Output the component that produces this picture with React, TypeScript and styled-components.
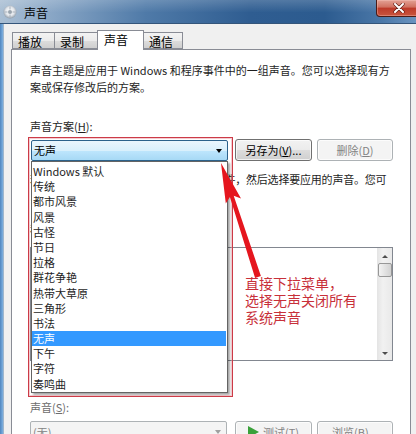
import styled, { createGlobalStyle } from 'styled-components';

const GlobalStyle = createGlobalStyle`
  html, body {
    margin: 0;
    padding: 0;
    background: #ffffff;
  }
`;

const Window = styled.div`
  position: relative;
  width: 416px;
  height: 434px;
  overflow: hidden;
  background: #f0f0f0;
  font-family: 'Noto Sans CJK SC', 'Noto Sans', sans-serif;
  font-size: 11px;
  color: #1e1e1e;
`;

const TitleBar = styled.div`
  height: 23px;
  display: flex;
  align-items: flex-start;
  border-bottom: 1px solid #34557a;
  background:
    linear-gradient(180deg, rgba(255, 255, 255, 0.18), rgba(255, 255, 255, 0) 55%),
    linear-gradient(90deg, #a9bed3 0%, #8aa7c6 12%, #4f7aa8 35%, #2f5d91 60%, #2c5b8f 78%, #4b78a8 92%, #6a94c0 100%);
`;

const IconSlot = styled.div`
  margin: 5px 0 0 3px;
  width: 14px;
  height: 14px;
`;

const Caption = styled.div`
  margin: 5px 0 0 7px;
  font-size: 12px;
  line-height: 16px;
  color: #000;
`;

const CloseButton = styled.div`
  width: 43px;
  height: 16px;
  margin-left: auto;
  margin-right: -5px;
  display: flex;
  align-items: center;
  justify-content: center;
  border: 1px solid #4a1b17;
  border-top: none;
  border-radius: 0 0 4px 4px;
  background: linear-gradient(180deg, #e3a295 0%, #d0705f 45%, #bd3a29 50%, #c9553f 100%);
  box-shadow: inset 0 0 0 1px rgba(255, 210, 200, 0.35);
`;

const Frame = styled.div`
  display: flex;
  height: 410px;
`;

const LeftEdge = styled.div`
  width: 4px;
  background: linear-gradient(90deg, #4f86c0, #7fb1e0);
  border-right: 1px solid #9fb6cc;
  box-sizing: border-box;
`;

const Body = styled.div`
  flex: 1;
  display: flex;
  flex-direction: column;
  padding: 6px 5px 0 7px;
`;

const Tabs = styled.div`
  position: relative;
  z-index: 1;
  display: flex;
  align-items: flex-end;
  height: 19px;
  padding-left: 1px;
`;

const Tab = styled.div<{ $active?: boolean; $w: number; $first?: boolean }>`
  box-sizing: border-box;
  width: ${({ $w }) => $w}px;
  height: ${({ $active }) => ($active ? 20 : 17)}px;
  margin-left: ${({ $first }) => ($first ? 0 : -1)}px;
  margin-bottom: ${({ $active }) => ($active ? -1 : 0)}px;
  padding: ${({ $active }) => ($active ? '1px 0 0 6px' : '1px 0 0 5px')};
  border: 1px solid #898c95;
  border-bottom: ${({ $active }) => ($active ? 'none' : '1px solid #898c95')};
  background: ${({ $active }) =>
    $active ? '#ffffff' : 'linear-gradient(180deg, #f3f3f3 0%, #ebebeb 50%, #dddddd 51%, #cfcfcf 100%)'};
  position: relative;
  z-index: ${({ $active }) => ($active ? 2 : 1)};
  font-size: 12px;
  line-height: 15px;
  color: #000;
`;

const Panel = styled.div`
  position: relative;
  flex: 1;
  background: #ffffff;
  border: 1px solid #898c95;
  padding: 12px 17px 0 18px;
`;

const Para = styled.p<{ $top?: number; $tight?: boolean }>`
  margin: ${({ $top }) => $top ?? 0}px 0 0;
  line-height: 17px;
  white-space: nowrap;
  letter-spacing: ${({ $tight }) => ($tight ? '-0.2px' : 'normal')};
`;

const Label = styled.div<{ $top: number; $disabled?: boolean }>`
  margin-top: ${({ $top }) => $top}px;
  line-height: 17px;
  color: ${({ $disabled }) => ($disabled ? '#6d6d6d' : '#1e1e1e')};
`;

const Row = styled.div<{ $top: number }>`
  display: flex;
  align-items: flex-start;
  margin-top: ${({ $top }) => $top}px;
  height: 22px;
`;

const Combo = styled.div<{ $open?: boolean; $disabled?: boolean }>`
  box-sizing: border-box;
  width: 197px;
  height: ${({ $open }) => ($open ? 21 : 22)}px;
  margin: ${({ $open }) => ($open ? '1px 7px 0 1px' : '0 8px 0 0')};
  display: flex;
  align-items: center;
  justify-content: space-between;
  padding: 0 5px 0 2px;
  border: 1px solid ${({ $open, $disabled }) => ($open ? '#2c628b' : $disabled ? '#adb2b5' : '#707070')};
  border-radius: 2px;
  background: ${({ $open, $disabled }) =>
    $open
      ? 'linear-gradient(180deg, #eaf6fd 0%, #d9f0fc 50%, #bee6fd 51%, #a7d9f5 100%)'
      : $disabled
      ? '#f4f4f4'
      : 'linear-gradient(180deg, #f2f2f2, #dddddd)'};
  color: ${({ $disabled }) => ($disabled ? '#838383' : '#000')};
  line-height: 17px;
`;

const Caret = styled.span<{ $disabled?: boolean }>`
  width: 0;
  height: 0;
  border-left: 3.5px solid transparent;
  border-right: 3.5px solid transparent;
  border-top: 4px solid ${({ $disabled }) => ($disabled ? '#a0a0a0' : '#000')};
`;

const Button = styled.div<{ $w: number; $disabled?: boolean; $gap?: number }>`
  box-sizing: border-box;
  width: ${({ $w }) => $w}px;
  height: 22px;
  margin-left: ${({ $gap }) => $gap ?? 0}px;
  display: flex;
  align-items: center;
  justify-content: center;
  gap: 4px;
  border: 1px solid ${({ $disabled }) => ($disabled ? '#adb2b5' : '#707070')};
  border-radius: 3px;
  background: ${({ $disabled }) =>
    $disabled ? '#f4f4f4' : 'linear-gradient(180deg, #f2f2f2 0%, #ebebeb 50%, #dddddd 51%, #cfcfcf 100%)'};
  box-shadow: inset 0 0 0 1px rgba(255, 255, 255, 0.7);
  color: ${({ $disabled }) => ($disabled ? '#838383' : '#000')};
  line-height: 17px;
`;

const PlayMark = styled.span`
  width: 0;
  height: 0;
  border-top: 6px solid transparent;
  border-bottom: 6px solid transparent;
  border-left: 11px solid #3aa13a;
`;

const EventsBox = styled.div`
  box-sizing: border-box;
  margin-top: 9px;
  height: 114px;
  border: 1px solid #828790;
  display: flex;
  justify-content: flex-end;
`;

const ScrollBar = styled.div`
  width: 15px;
  display: flex;
  flex-direction: column;
  align-items: center;
  background: linear-gradient(90deg, #e4e4e4, #f1f1f1 40%, #e9e9e9);
`;

const ScrollArrow = styled.span<{ $down?: boolean }>`
  margin: ${({ $down }) => ($down ? 'auto 0 5px' : '7px 0 0')};
  width: 0;
  height: 0;
  border-left: 3px solid transparent;
  border-right: 3px solid transparent;
  ${({ $down }) => ($down ? 'border-top: 3px solid #4d4d4d;' : 'border-bottom: 3px solid #4d4d4d;')}
`;

const Thumb = styled.div`
  box-sizing: border-box;
  margin-top: 5px;
  width: 14px;
  height: 14px;
  border: 1px solid #979797;
  border-radius: 2px;
  background: linear-gradient(90deg, #f3f3f3, #e2e2e2 50%, #d2d2d2);
`;

const DropList = styled.div`
  position: absolute;
  left: 19px;
  top: 111px;
  z-index: 3;
  box-sizing: border-box;
  width: 197px;
  height: 232px;
  padding: 2px 1px 0 0;
  background: #ffffff;
  border: 1px solid #646464;
  box-shadow: 2px 2px 2px rgba(0, 0, 0, 0.35);
`;

const Item = styled.div<{ $selected?: boolean }>`
  height: 15.2px;
  line-height: 15.2px;
  padding-left: 1px;
  white-space: nowrap;
  background: ${({ $selected }) => ($selected ? '#3399ff' : 'transparent')};
  color: ${({ $selected }) => ($selected ? '#ffffff' : '#1e1e1e')};
`;

const RedFrame = styled.div`
  position: absolute;
  left: 16px;
  top: 87px;
  z-index: 4;
  box-sizing: border-box;
  width: 205px;
  height: 260px;
  border: 1px solid #cc3b47;
  box-shadow: inset 0 0 0 1px rgba(230, 140, 150, 0.45);
  pointer-events: none;
`;

const Note = styled.div`
  position: absolute;
  left: 233px;
  top: 225px;
  z-index: 4;
  font-size: 14px;
  line-height: 17px;
  color: #c8303a;
  white-space: nowrap;
`;

const ArrowLayer = styled.svg`
  position: absolute;
  left: 0;
  top: 0;
  z-index: 6;
  pointer-events: none;
`;

const schemes = [
  'Windows 默认',
  '传统',
  '都市风景',
  '风景',
  '古怪',
  '节日',
  '拉格',
  '群花争艳',
  '热带大草原',
  '三角形',
  '书法',
  '无声',
  '下午',
  '字符',
  '奏鸣曲',
];

const TitleIcon = () => (
  <svg width="14" height="14" viewBox="0 0 14 14">
    <defs>
      <radialGradient id="ti" cx="50%" cy="45%" r="55%">
        <stop offset="0" stopColor="#ffffff" />
        <stop offset="0.6" stopColor="#e3e7ec" />
        <stop offset="1" stopColor="#8f9aa6" />
      </radialGradient>
    </defs>
    <circle cx="7" cy="7" r="6.5" fill="url(#ti)" />
    <path d="M7 1.5 L7 4.5 M12.5 7 L9.5 7 M7 12.5 L7 9.5 M1.5 7 L4.5 7" stroke="#a8b1bb" strokeWidth="1" />
    <circle cx="7" cy="7" r="2" fill="#9aa4ae" />
  </svg>
);

export default function App() {
  return (
    <>
      <GlobalStyle />
      <Window>
        <TitleBar>
          <IconSlot>
            <TitleIcon />
          </IconSlot>
          <Caption>声音</Caption>
          <CloseButton>
            <svg width="12" height="10" viewBox="0 0 12 10">
              <path d="M2 1 L10 9 M10 1 L2 9" stroke="#5a1a12" strokeWidth="3.2" strokeLinecap="round" />
              <path d="M2 1 L10 9 M10 1 L2 9" stroke="#ffffff" strokeWidth="2" strokeLinecap="round" />
            </svg>
          </CloseButton>
        </TitleBar>
        <Frame>
          <LeftEdge />
          <Body>
            <Tabs>
              <Tab $w={43} $first>播放</Tab>
              <Tab $w={44}>录制</Tab>
              <Tab $w={47} $active>声音</Tab>
              <Tab $w={40}>通信</Tab>
            </Tabs>
            <Panel>
              <Para>
                声音主题是应用于 Windows 和程序事件中的一组声音。您可以选择现有方
                <br />
                案或保存修改后的方案。
              </Para>
              <Label $top={22}>
                声音方案(<u>H</u>):
              </Label>
              <Row $top={4}>
                <Combo $open>
                  <span>无声</span>
                  <Caret />
                </Combo>
                <Button $w={77}>
                  <span>
                    另存为(<u>V</u>)...
                  </span>
                </Button>
                <Button $w={76} $gap={5} $disabled>
                  <span>
                    删除(<u>D</u>)
                  </span>
                </Button>
              </Row>
              <Para $top={10} $tight>
                若要更改声音，请在下列表中单击程序事件，然后选择要应用的声音。您可
                <br />
                以将更改保存为新的声音方案。
              </Para>
              <Label $top={16}>
                程序事件(<u>E</u>):
              </Label>
              <EventsBox>
                <ScrollBar>
                  <ScrollArrow />
                  <Thumb />
                  <ScrollArrow $down />
                </ScrollBar>
              </EventsBox>
              <Label $top={38} $disabled>
                声音(<u>S</u>):
              </Label>
              <Row $top={5}>
                <Combo $disabled>
                  <span>(无)</span>
                  <Caret $disabled />
                </Combo>
                <Button $w={77} $disabled>
                  <PlayMark />
                  <span>
                    测试(<u>T</u>)
                  </span>
                </Button>
                <Button $w={76} $gap={5} $disabled>
                  <span>
                    浏览(<u>B</u>)...
                  </span>
                </Button>
              </Row>

              <DropList>
                {schemes.map((s) => (
                  <Item key={s} $selected={s === '无声'}>
                    {s}
                  </Item>
                ))}
              </DropList>
              <RedFrame />
              <Note>
                直接下拉菜单，
                <br />
                选择无声关闭所有
                <br />
                系统声音
              </Note>
            </Panel>
          </Body>
        </Frame>
        <ArrowLayer width="416" height="434" viewBox="0 0 416 434">
          <polygon
            points="221,163 241,198.5 233.7,195.7 260.9,276.1 255.1,277.9 229.9,196.9 225.8,203.5"
            fill="#e5161e"
          />
        </ArrowLayer>
      </Window>
    </>
  );
}
